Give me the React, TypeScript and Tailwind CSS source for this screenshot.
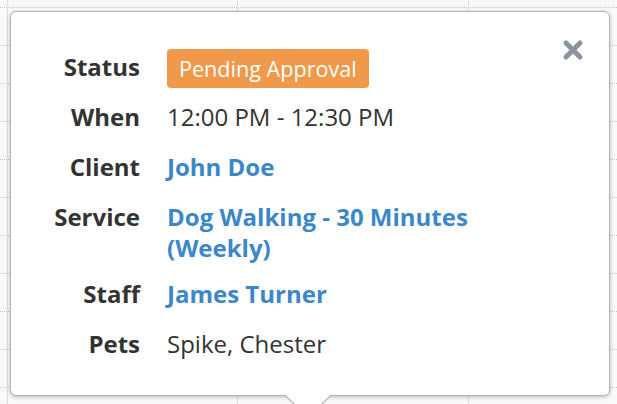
const rows = [
    { label: 'Status', kind: 'badge', value: 'Pending Approval' },
    { label: 'When', kind: 'text', value: '12:00 PM - 12:30 PM' },
    { label: 'Client', kind: 'link', value: 'John Doe' },
    { label: 'Service', kind: 'link', value: 'Dog Walking - 30 Minutes (Weekly)' },
    { label: 'Staff', kind: 'link', value: 'James Turner' },
    { label: 'Pets', kind: 'text', value: 'Spike, Chester' },
]

function GridRow({ top, dotted }: { top: boolean; dotted: boolean }) {
    return (
        <div
            className={
                top
                    ? 'flex h-[7px]'
                    : dotted
                        ? 'flex h-[38px] border-t border-dotted border-[#c4c4c4]'
                        : 'flex h-[38px] border-t border-solid border-[#dddddd]'
            }
        >
            <div className="w-[8px] border-r border-solid border-[#dddddd]" />
            <div className="w-[230px] border-r border-solid border-[#dddddd]" />
            <div className="w-[231px] border-r border-solid border-[#dddddd]" />
            <div className="flex-1" />
        </div>
    )
}

export default function App() {
    return (
        <div className="relative h-[404px] w-[617px] overflow-hidden bg-[#f9f9f9] font-['Open_Sans',sans-serif]">
            {/* calendar grid behind the popover */}
            <div className="flex flex-col">
                <GridRow top dotted={false} />
                {Array.from({ length: 11 }).map((_, i) => (
                    <GridRow key={i} top={false} dotted={i % 2 === 0} />
                ))}
            </div>

            {/* appointment popover */}
            <div className="absolute left-[10px] top-[11px] h-[385px] w-[600px] rounded-[6px] border border-[#b3b3b3] bg-white pl-[29px] pt-[30px] shadow-[0_1px_4px_rgba(0,0,0,0.25)]">
                <button className="absolute right-[25px] top-[27px] h-[22px] w-[22px]">
                    <svg viewBox="0 0 22 22" className="h-[22px] w-[22px]">
                        <path d="M4 4 L18 18 M18 4 L4 18" stroke="#8b939d" strokeWidth="5" strokeLinecap="round" />
                    </svg>
                </button>

                <div className="flex flex-col">
                    {rows.map((r) => (
                        <div
                            key={r.label}
                            className={
                                r.label === 'Service'
                                    ? 'flex pb-[6px] pt-[9px] text-[24px] leading-[31px]'
                                    : 'flex py-[9px] text-[24px] leading-[32px]'
                            }
                        >
                            <div className="w-[100px] shrink-0 text-right font-bold text-[#333333]">{r.label}</div>
                            <div className="ml-[27px] w-[320px]">
                                {r.kind === 'badge' && (
                                    <div className="-mb-[5px] -mt-[2px] flex h-[39px] w-[202px] items-center rounded-[4px] bg-[#f0994a] px-[12px] text-[21.6px] text-white">
                                        {r.value}
                                    </div>
                                )}
                                {r.kind === 'text' && <span className="text-[#333333]">{r.value}</span>}
                                {r.kind === 'link' && <span className="font-bold text-[#3b87c9]">{r.value}</span>}
                            </div>
                        </div>
                    ))}
                </div>

                <svg
                    className="absolute left-[274px] top-[383px]"
                    width="46"
                    height="24"
                    viewBox="0 0 46 24"
                >
                    <polygon points="0,0 23,23 46,0" fill="white" />
                    <polyline points="0,0 23,23 46,0" fill="none" stroke="#b3b3b3" strokeWidth="1.2" />
                </svg>
            </div>
        </div>
    )
}
